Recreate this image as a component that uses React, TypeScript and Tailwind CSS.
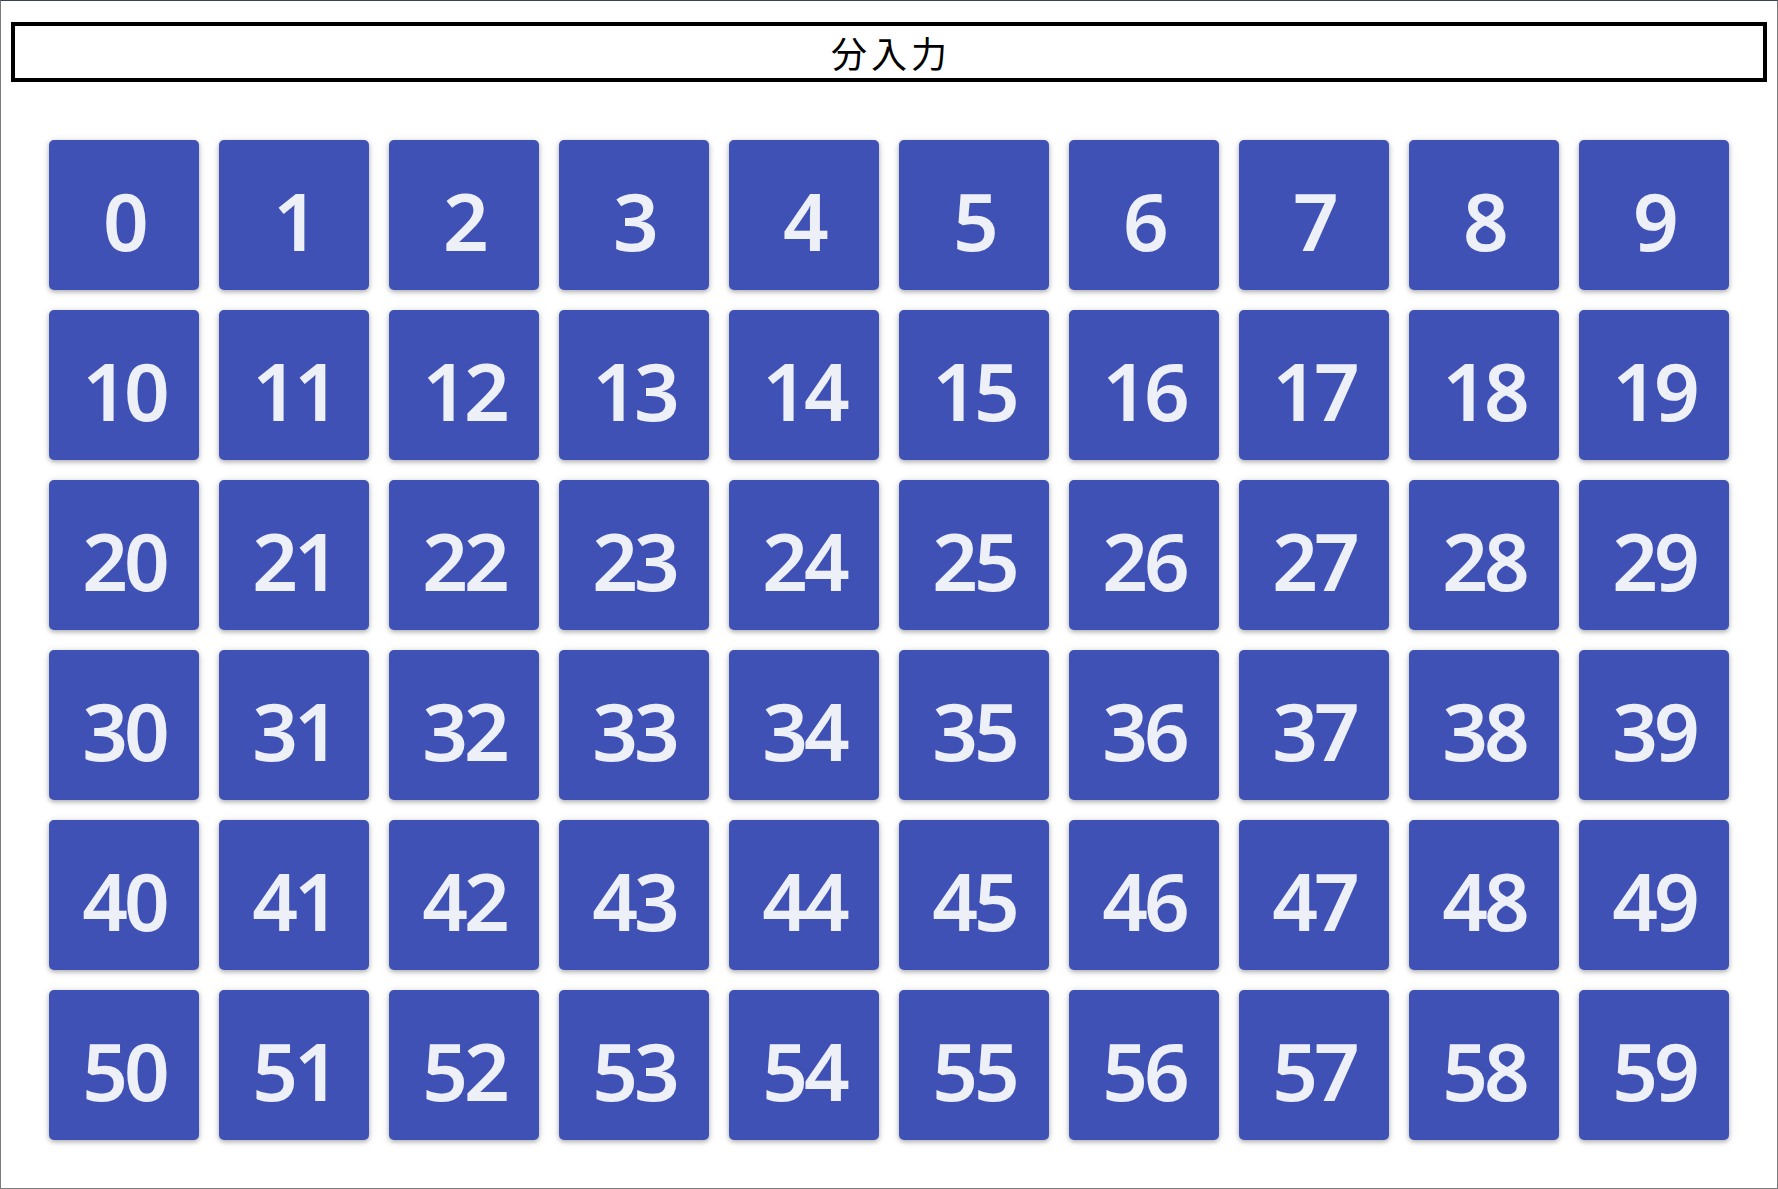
import React from 'react';

const numbers = Array.from({ length: 60 }, (_, i) => i);

const App: React.FC = () => {
  return (
    <div className="w-[1778px] h-[1189px] bg-white border border-[#7a7a7a] border-t-[#3b3f58] overflow-hidden">
      <div className="pt-[21px] px-[10px]">
        <div
          className="h-[60px] border-[4px] border-black flex items-center justify-center text-[36px] tracking-[4px] pl-[4px] text-black"
          style={{ fontFamily: '"Noto Sans CJK JP", "Noto Sans", sans-serif' }}
        >
          分入力
        </div>
      </div>

      <div className="grid grid-cols-[repeat(10,150px)] gap-[20px] pl-[48px] pt-[58px]">
        {numbers.map((n) => (
          <div
            key={n}
            className="w-[150px] h-[150px] rounded-[5px] bg-[#3f51b5] shadow-[0_2px_4px_rgba(0,0,0,0.25),0_1px_8px_rgba(0,0,0,0.12)] flex items-center justify-center text-[80px] font-semibold tracking-[-4px] text-[#eef0f8] leading-none pt-[10px]"
            style={{ fontFamily: '"Noto Sans", "Open Sans", sans-serif' }}
          >
            {n}
          </div>
        ))}
      </div>
    </div>
  );
};

export default App;
